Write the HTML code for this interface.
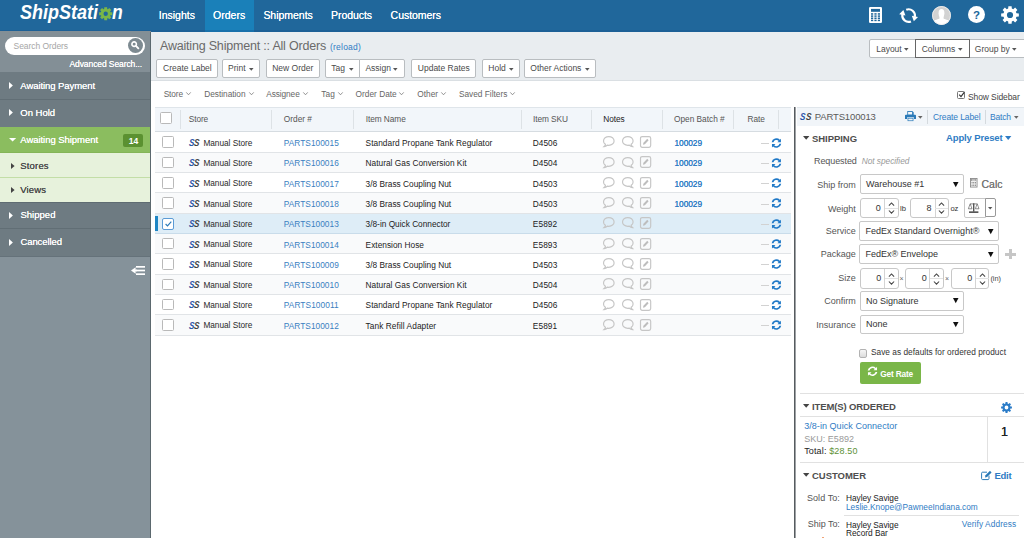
<!DOCTYPE html>
<html><head><meta charset="utf-8"><title>ShipStation</title>
<style>
*{box-sizing:border-box;margin:0;padding:0}
html,body{width:1024px;height:538px;overflow:hidden;background:#fff;font-family:"Liberation Sans",sans-serif}
.t{position:absolute;white-space:nowrap}
.b{position:absolute}
svg{position:absolute;overflow:visible}
.btn{position:absolute;background:#fff;border:1px solid #b9bdc0;border-radius:2px}
.sel{position:absolute;background:#fff;border:1px solid #c8c8c8;border-radius:2px}
.cb{position:absolute;width:12px;height:12px;background:#fff;border:1px solid #b9b9b9;border-radius:1.5px}
.car{position:absolute;width:0;height:0;border-left:2.5px solid transparent;border-right:2.5px solid transparent;border-top:3px solid #444}
</style></head><body>
<div class="b" style="left:0px;top:0px;width:1024.00px;height:32.00px;background:#20679b;"></div>
<div class="b" style="left:204.7px;top:0px;width:49.10px;height:32.00px;background:#1a80b9;"></div>
<div class="b" style="left:0px;top:30px;width:1024.00px;height:2.00px;background:rgba(20,80,140,0.3);"></div>
<svg style="left:98.5px;top:7.1px" width="13.4" height="13.4" viewBox="0 0 14 14"><path fill="#7ab648" fill-rule="evenodd" d="M11.95 5.41 L13.84 5.50 L13.84 8.50 L11.95 8.59 L11.62 9.38 L12.90 10.77 L10.77 12.90 L9.38 11.62 L8.59 11.95 L8.50 13.84 L5.50 13.84 L5.41 11.95 L4.62 11.62 L3.23 12.90 L1.10 10.77 L2.38 9.38 L2.05 8.59 L0.16 8.50 L0.16 5.50 L2.05 5.41 L2.38 4.62 L1.10 3.23 L3.23 1.10 L4.62 2.38 L5.41 2.05 L5.50 0.16 L8.50 0.16 L8.59 2.05 L9.38 2.38 L10.77 1.10 L12.90 3.23 L11.62 4.62Z M9.30 7.00 A2.3 2.3 0 1 0 4.70 7.00 A2.3 2.3 0 1 0 9.30 7.00Z"/></svg>
<svg style="left:869px;top:6.8px" width="13" height="16" viewBox="0 0 13 16"><rect x="0" y="0" width="13" height="16" rx="1.2" fill="#fff"/><rect x="2" y="1.9" width="9" height="2.9" fill="#20679b"/><g fill="#20679b"><rect x="2" y="6.2" width="2.2" height="1.5"/><rect x="5.4" y="6.2" width="2.2" height="1.5"/><rect x="8.8" y="6.2" width="2.2" height="1.5"/><rect x="2" y="8.35" width="2.2" height="1.5"/><rect x="5.4" y="8.35" width="2.2" height="1.5"/><rect x="8.8" y="8.35" width="2.2" height="1.5"/><rect x="2" y="10.5" width="2.2" height="1.5"/><rect x="5.4" y="10.5" width="2.2" height="1.5"/><rect x="8.8" y="10.5" width="2.2" height="1.5"/><rect x="2" y="12.65" width="2.2" height="1.5"/><rect x="5.4" y="12.65" width="2.2" height="1.5"/><rect x="8.8" y="12.65" width="2.2" height="1.5"/></g></svg>
<svg style="left:899px;top:8px" width="20" height="16" viewBox="0 0 20 16"><path d="M7.24 1.76A6.3 6.3 0 0 1 15.76 8.91" fill="none" stroke="#fff" stroke-width="2.2"/><path d="M19.02 8.99L12.76 7.66L14.85 13.21Z" fill="#fff"/><path d="M11.96 13.44A6.3 6.3 0 0 1 3.44 6.29" fill="none" stroke="#fff" stroke-width="2.2"/><path d="M0.18 6.21L6.44 7.54L4.35 1.99Z" fill="#fff"/></svg>
<svg style="left:932.2px;top:6px" width="19" height="19" viewBox="0 0 19 19"><defs><clipPath id="av"><circle cx="9.5" cy="9.5" r="9.3"/></clipPath></defs><circle cx="9.5" cy="9.5" r="9.4" fill="#d2d2d2"/><g clip-path="url(#av)" fill="#fff"><ellipse cx="9.5" cy="7.3" rx="2.9" ry="4.2"/><path d="M7.4 9h4.2v3.4c0 0.8 5.6 1.2 6.6 3.4v4H0.8v-4c1-2.2 6.6-2.6 6.6-3.4z"/></g><circle cx="9.5" cy="9.5" r="9" fill="none" stroke="#ececec" stroke-width="0.9"/></svg>
<div class="b" style="left:967.8px;top:6px;width:17.2px;height:17.2px;border-radius:9px;background:#fff"></div>
<svg style="left:1001px;top:6px" width="18" height="18" viewBox="0 0 18 18"><path fill="#fff" fill-rule="evenodd" d="M15.45 7.18 L17.85 7.38 L17.85 10.62 L15.45 10.82 L14.85 12.27 L16.40 14.12 L14.12 16.40 L12.27 14.85 L10.82 15.45 L10.62 17.85 L7.38 17.85 L7.18 15.45 L5.73 14.85 L3.88 16.40 L1.60 14.12 L3.15 12.27 L2.55 10.82 L0.15 10.62 L0.15 7.38 L2.55 7.18 L3.15 5.73 L1.60 3.88 L3.88 1.60 L5.73 3.15 L7.18 2.55 L7.38 0.15 L10.62 0.15 L10.82 2.55 L12.27 3.15 L14.12 1.60 L16.40 3.88 L14.85 5.73Z M12.10 9.00 A3.1 3.1 0 1 0 5.90 9.00 A3.1 3.1 0 1 0 12.10 9.00Z"/></svg>
<div class="b" style="left:0px;top:31px;width:151.00px;height:507.00px;background:#85929a;"></div>
<div class="b" style="left:0px;top:31px;width:151.00px;height:41.00px;background:#838f96;"></div>
<div class="b" style="left:0px;top:72px;width:151.00px;height:27.30px;background:#6e7b82;"></div>
<div class="b" style="left:0px;top:99.3px;width:151.00px;height:27.70px;background:#6e7b82;border-top:1px solid #616e75;"></div>
<div class="b" style="left:0px;top:127px;width:151.00px;height:25.20px;background:#8bbd5f;"></div>
<div class="b" style="left:0px;top:151.8px;width:151.00px;height:25.70px;background:#e7f2dc;border-top:1px solid #84b558;"></div>
<div class="b" style="left:0px;top:176.9px;width:151.00px;height:25.40px;background:#e7f2dc;border-top:1px solid #c3dea7;"></div>
<div class="b" style="left:0px;top:202.3px;width:151.00px;height:26.00px;background:#6e7b82;border-top:1px solid #5f6c72;"></div>
<div class="b" style="left:0px;top:228.3px;width:151.00px;height:27.70px;background:#6e7b82;border-top:1px solid #616e75;"></div>
<div class="b" style="left:0px;top:256px;width:151.00px;height:1.00px;background:#65727a;"></div>
<div class="b" style="left:150px;top:32px;width:1.10px;height:506.00px;background:#5b686e;"></div>
<div class="b" style="left:5.2px;top:36.7px;width:140px;height:18px;border-radius:9px;background:#fff"></div>
<div class="b" style="left:127.8px;top:38px;width:15.2px;height:15.2px;border-radius:8px;background:#7d8a91"></div>
<svg style="left:131.4px;top:41.3px" width="8.4" height="8.4" viewBox="0 0 8 8"><circle cx="3" cy="3" r="2.15" fill="none" stroke="#fff" stroke-width="1.5"/><path d="M4.7 4.7L7 7" stroke="#fff" stroke-width="1.8" stroke-linecap="round"/></svg>
<svg style="left:8.5px;top:82.40px" width="3.9" height="7.0" viewBox="0 0 3.9 7.0"><path d="M0 0L3.9 3.5L0 7.0Z" fill="#fff"/></svg>
<svg style="left:8.5px;top:109.40px" width="3.9" height="7.0" viewBox="0 0 3.9 7.0"><path d="M0 0L3.9 3.5L0 7.0Z" fill="#fff"/></svg>
<svg style="left:8.9px;top:138.35px" width="7.2" height="3.5" viewBox="0 0 7.2 3.5"><path d="M0 0H7.2L3.6 3.5Z" fill="#fff"/></svg>
<svg style="left:10.6px;top:162.60px" width="3.6" height="6.0" viewBox="0 0 3.6 6.0"><path d="M0 0L3.6 3.0L0 6.0Z" fill="#444"/></svg>
<svg style="left:10.6px;top:187.00px" width="3.6" height="6.0" viewBox="0 0 3.6 6.0"><path d="M0 0L3.6 3.0L0 6.0Z" fill="#444"/></svg>
<svg style="left:8.5px;top:211.80px" width="3.9" height="7.0" viewBox="0 0 3.9 7.0"><path d="M0 0L3.9 3.5L0 7.0Z" fill="#fff"/></svg>
<svg style="left:8.5px;top:238.60px" width="3.9" height="7.0" viewBox="0 0 3.9 7.0"><path d="M0 0L3.9 3.5L0 7.0Z" fill="#fff"/></svg>
<div class="b" style="left:123px;top:134px;width:20.4px;height:13.2px;border-radius:2px;background:#5b9131"></div>
<svg style="left:131.3px;top:265.6px" width="14" height="9" viewBox="0 0 14 9"><g fill="#fff"><rect x="5" y="0" width="9" height="1.7"/><rect x="5" y="3.65" width="9" height="1.7"/><rect x="5" y="7.3" width="9" height="1.7"/><path d="M0 4.5L4.6 1.2V7.8z"/><rect x="3" y="3.65" width="3" height="1.7"/></g></svg>
<div class="b" style="left:151.1px;top:32px;width:872.90px;height:49.40px;background:#e9edf0;border-bottom:1px solid #dadfe3;"></div>
<div class="btn" style="left:156.3px;top:59px;width:62.20px;height:18.50px;"></div>
<div class="btn" style="left:221.6px;top:59px;width:38.40px;height:18.50px;"></div>
<div class="btn" style="left:265.5px;top:59px;width:54.50px;height:18.50px;"></div>
<div class="btn" style="left:325px;top:59px;width:34.60px;height:18.50px;border-radius:2px 0 0 2px;"></div>
<div class="btn" style="left:358.8px;top:59px;width:46.20px;height:18.50px;border-radius:0 2px 2px 0;"></div>
<div class="btn" style="left:411.2px;top:59px;width:65.20px;height:18.50px;"></div>
<div class="btn" style="left:482.2px;top:59px;width:37.80px;height:18.50px;"></div>
<div class="btn" style="left:524px;top:59px;width:71.70px;height:18.50px;"></div>
<div class="btn" style="left:869.3px;top:39.4px;width:46.30px;height:18.50px;border-radius:2px 0 0 2px;"></div>
<div class="btn" style="left:969.3px;top:39.4px;width:56.70px;height:18.50px;border-radius:0;"></div>
<div class="btn" style="left:915.1px;top:39.4px;width:54.70px;height:18.50px;border-color:#666;border-radius:0;"></div>
<svg style="left:249.3px;top:67.55px" width="4.6" height="2.7" viewBox="0 0 4.6 2.7"><path d="M0 0H4.6L2.3 2.7Z" fill="#555"/></svg>
<svg style="left:348.7px;top:67.55px" width="4.6" height="2.7" viewBox="0 0 4.6 2.7"><path d="M0 0H4.6L2.3 2.7Z" fill="#555"/></svg>
<svg style="left:393.3px;top:67.55px" width="4.6" height="2.7" viewBox="0 0 4.6 2.7"><path d="M0 0H4.6L2.3 2.7Z" fill="#555"/></svg>
<svg style="left:509.3px;top:67.55px" width="4.6" height="2.7" viewBox="0 0 4.6 2.7"><path d="M0 0H4.6L2.3 2.7Z" fill="#555"/></svg>
<svg style="left:584.5px;top:67.55px" width="4.6" height="2.7" viewBox="0 0 4.6 2.7"><path d="M0 0H4.6L2.3 2.7Z" fill="#555"/></svg>
<svg style="left:904px;top:48.35px" width="4.6" height="2.7" viewBox="0 0 4.6 2.7"><path d="M0 0H4.6L2.3 2.7Z" fill="#555"/></svg>
<svg style="left:957.6px;top:48.35px" width="4.6" height="2.7" viewBox="0 0 4.6 2.7"><path d="M0 0H4.6L2.3 2.7Z" fill="#555"/></svg>
<svg style="left:1012px;top:48.35px" width="4.6" height="2.7" viewBox="0 0 4.6 2.7"><path d="M0 0H4.6L2.3 2.7Z" fill="#555"/></svg>
<svg style="left:185.6px;top:92.10000000000001px" width="5" height="3.4" viewBox="0 0 5 3.4"><path d="M0.3 0.4L2.5 2.8L4.7 0.4" fill="none" stroke="#777" stroke-width="0.8"/></svg>
<svg style="left:248.8px;top:92.10000000000001px" width="5" height="3.4" viewBox="0 0 5 3.4"><path d="M0.3 0.4L2.5 2.8L4.7 0.4" fill="none" stroke="#777" stroke-width="0.8"/></svg>
<svg style="left:302.6px;top:92.10000000000001px" width="5" height="3.4" viewBox="0 0 5 3.4"><path d="M0.3 0.4L2.5 2.8L4.7 0.4" fill="none" stroke="#777" stroke-width="0.8"/></svg>
<svg style="left:338px;top:92.10000000000001px" width="5" height="3.4" viewBox="0 0 5 3.4"><path d="M0.3 0.4L2.5 2.8L4.7 0.4" fill="none" stroke="#777" stroke-width="0.8"/></svg>
<svg style="left:399.3px;top:92.10000000000001px" width="5" height="3.4" viewBox="0 0 5 3.4"><path d="M0.3 0.4L2.5 2.8L4.7 0.4" fill="none" stroke="#777" stroke-width="0.8"/></svg>
<svg style="left:440.6px;top:92.10000000000001px" width="5" height="3.4" viewBox="0 0 5 3.4"><path d="M0.3 0.4L2.5 2.8L4.7 0.4" fill="none" stroke="#777" stroke-width="0.8"/></svg>
<svg style="left:509.8px;top:92.10000000000001px" width="5" height="3.4" viewBox="0 0 5 3.4"><path d="M0.3 0.4L2.5 2.8L4.7 0.4" fill="none" stroke="#777" stroke-width="0.8"/></svg>
<div class="b" style="left:956.5px;top:91px;width:8.6px;height:8.4px;border:1px solid #777;border-radius:1.5px;background:#fff"></div>
<svg style="left:957.8px;top:90.6px" width="8" height="8" viewBox="0 0 8 8"><path d="M1.2 3.6L3 5.6L6.4 1.2" fill="none" stroke="#333" stroke-width="1.2"/></svg>
<div class="b" style="left:155.4px;top:107px;width:635.60px;height:25.00px;background:#f2f6fa;border-top:1px solid #dfe5ea;border-bottom:1px solid #d6dce1;"></div>
<div class="b" style="left:180.0px;top:110px;width:1.00px;height:19.00px;background:#dde2e6;"></div>
<div class="b" style="left:270.8px;top:110px;width:1.00px;height:19.00px;background:#dde2e6;"></div>
<div class="b" style="left:353.0px;top:110px;width:1.00px;height:19.00px;background:#dde2e6;"></div>
<div class="b" style="left:520.8px;top:110px;width:1.00px;height:19.00px;background:#dde2e6;"></div>
<div class="b" style="left:590.9px;top:110px;width:1.00px;height:19.00px;background:#dde2e6;"></div>
<div class="b" style="left:661.7px;top:110px;width:1.00px;height:19.00px;background:#dde2e6;"></div>
<div class="b" style="left:733.0px;top:110px;width:1.00px;height:19.00px;background:#dde2e6;"></div>
<div class="b" style="left:778.2px;top:110px;width:1.00px;height:19.00px;background:#dde2e6;"></div>
<div class="cb" style="left:160.3px;top:112px"></div>
<div class="b" style="left:155.4px;top:132.55px;width:635.60px;height:20.30px;background:#fff;border-bottom:1px solid #e1e4e7;"></div>
<div class="cb" style="left:162.2px;top:136.40px;width:11.8px;height:11.6px"></div>
<svg style="left:603.2px;top:136.20px" width="11.6" height="11" viewBox="0 0 11.4 10" preserveAspectRatio="none"><path d="M5.7 0.5C8.6 0.5 10.9 2.3 10.9 4.5S8.6 8.5 5.7 8.5C5.2 8.5 4.7 8.45 4.2 8.35C3.4 9 2.3 9.5 1.1 9.6C1.8 9 2.3 8.3 2.4 7.6C1.2 6.9 0.5 5.8 0.5 4.5C0.5 2.3 2.8 0.5 5.7 0.5Z" fill="none" stroke="#c6c6c6" stroke-width="1.15"/></svg>
<svg style="left:621.8px;top:136.20px" width="11.6" height="11" viewBox="0 0 11.4 10" preserveAspectRatio="none"><g transform="translate(11.4,0) scale(-1,1)"><path d="M5.7 0.5C8.6 0.5 10.9 2.3 10.9 4.5S8.6 8.5 5.7 8.5C5.2 8.5 4.7 8.45 4.2 8.35C3.4 9 2.3 9.5 1.1 9.6C1.8 9 2.3 8.3 2.4 7.6C1.2 6.9 0.5 5.8 0.5 4.5C0.5 2.3 2.8 0.5 5.7 0.5Z" fill="none" stroke="#c6c6c6" stroke-width="1.15"/></g></svg>
<svg style="left:640.3px;top:136.10px" width="11.2" height="11.8" viewBox="0 0 11 11" preserveAspectRatio="none"><rect x="0.5" y="0.5" width="10" height="10" rx="1.6" fill="none" stroke="#c6c6c6" stroke-width="1.15"/><path d="M2.9 8.1L3.4 6.2L7.1 2.5L8.5 3.9L4.8 7.6Z" fill="#bdbdbd"/></svg>
<div class="b" style="left:760.8px;top:142.60000000000002px;width:7.80px;height:0.80px;background:#d2d2d2;"></div>
<svg style="left:770.5px;top:137.50px" width="10.9" height="10.2" viewBox="0 0 16 15"><path fill="#2079c7" d="M14.6 1v5.2h-5.2l1.9-1.9A4.6 4.6 0 0 0 3.6 6.4H0.9A7.2 7.2 0 0 1 13 2.6z M1.4 14v-5.2h5.2l-1.9 1.9A4.6 4.6 0 0 0 12.4 8.6h2.7A7.2 7.2 0 0 1 3 12.4z"/></svg>
<div class="b" style="left:155.4px;top:152.85000000000002px;width:635.60px;height:20.30px;background:#f9fafb;border-bottom:1px solid #e1e4e7;"></div>
<div class="cb" style="left:162.2px;top:156.70px;width:11.8px;height:11.6px"></div>
<svg style="left:603.2px;top:156.50px" width="11.6" height="11" viewBox="0 0 11.4 10" preserveAspectRatio="none"><path d="M5.7 0.5C8.6 0.5 10.9 2.3 10.9 4.5S8.6 8.5 5.7 8.5C5.2 8.5 4.7 8.45 4.2 8.35C3.4 9 2.3 9.5 1.1 9.6C1.8 9 2.3 8.3 2.4 7.6C1.2 6.9 0.5 5.8 0.5 4.5C0.5 2.3 2.8 0.5 5.7 0.5Z" fill="none" stroke="#c6c6c6" stroke-width="1.15"/></svg>
<svg style="left:621.8px;top:156.50px" width="11.6" height="11" viewBox="0 0 11.4 10" preserveAspectRatio="none"><g transform="translate(11.4,0) scale(-1,1)"><path d="M5.7 0.5C8.6 0.5 10.9 2.3 10.9 4.5S8.6 8.5 5.7 8.5C5.2 8.5 4.7 8.45 4.2 8.35C3.4 9 2.3 9.5 1.1 9.6C1.8 9 2.3 8.3 2.4 7.6C1.2 6.9 0.5 5.8 0.5 4.5C0.5 2.3 2.8 0.5 5.7 0.5Z" fill="none" stroke="#c6c6c6" stroke-width="1.15"/></g></svg>
<svg style="left:640.3px;top:156.40px" width="11.2" height="11.8" viewBox="0 0 11 11" preserveAspectRatio="none"><rect x="0.5" y="0.5" width="10" height="10" rx="1.6" fill="none" stroke="#c6c6c6" stroke-width="1.15"/><path d="M2.9 8.1L3.4 6.2L7.1 2.5L8.5 3.9L4.8 7.6Z" fill="#bdbdbd"/></svg>
<div class="b" style="left:760.8px;top:162.90000000000003px;width:7.80px;height:0.80px;background:#d2d2d2;"></div>
<svg style="left:770.5px;top:157.80px" width="10.9" height="10.2" viewBox="0 0 16 15"><path fill="#2079c7" d="M14.6 1v5.2h-5.2l1.9-1.9A4.6 4.6 0 0 0 3.6 6.4H0.9A7.2 7.2 0 0 1 13 2.6z M1.4 14v-5.2h5.2l-1.9 1.9A4.6 4.6 0 0 0 12.4 8.6h2.7A7.2 7.2 0 0 1 3 12.4z"/></svg>
<div class="b" style="left:155.4px;top:173.15px;width:635.60px;height:20.30px;background:#fff;border-bottom:1px solid #e1e4e7;"></div>
<div class="cb" style="left:162.2px;top:177.00px;width:11.8px;height:11.6px"></div>
<svg style="left:603.2px;top:176.80px" width="11.6" height="11" viewBox="0 0 11.4 10" preserveAspectRatio="none"><path d="M5.7 0.5C8.6 0.5 10.9 2.3 10.9 4.5S8.6 8.5 5.7 8.5C5.2 8.5 4.7 8.45 4.2 8.35C3.4 9 2.3 9.5 1.1 9.6C1.8 9 2.3 8.3 2.4 7.6C1.2 6.9 0.5 5.8 0.5 4.5C0.5 2.3 2.8 0.5 5.7 0.5Z" fill="none" stroke="#c6c6c6" stroke-width="1.15"/></svg>
<svg style="left:621.8px;top:176.80px" width="11.6" height="11" viewBox="0 0 11.4 10" preserveAspectRatio="none"><g transform="translate(11.4,0) scale(-1,1)"><path d="M5.7 0.5C8.6 0.5 10.9 2.3 10.9 4.5S8.6 8.5 5.7 8.5C5.2 8.5 4.7 8.45 4.2 8.35C3.4 9 2.3 9.5 1.1 9.6C1.8 9 2.3 8.3 2.4 7.6C1.2 6.9 0.5 5.8 0.5 4.5C0.5 2.3 2.8 0.5 5.7 0.5Z" fill="none" stroke="#c6c6c6" stroke-width="1.15"/></g></svg>
<svg style="left:640.3px;top:176.70px" width="11.2" height="11.8" viewBox="0 0 11 11" preserveAspectRatio="none"><rect x="0.5" y="0.5" width="10" height="10" rx="1.6" fill="none" stroke="#c6c6c6" stroke-width="1.15"/><path d="M2.9 8.1L3.4 6.2L7.1 2.5L8.5 3.9L4.8 7.6Z" fill="#bdbdbd"/></svg>
<div class="b" style="left:760.8px;top:183.20000000000002px;width:7.80px;height:0.80px;background:#d2d2d2;"></div>
<svg style="left:770.5px;top:178.10px" width="10.9" height="10.2" viewBox="0 0 16 15"><path fill="#2079c7" d="M14.6 1v5.2h-5.2l1.9-1.9A4.6 4.6 0 0 0 3.6 6.4H0.9A7.2 7.2 0 0 1 13 2.6z M1.4 14v-5.2h5.2l-1.9 1.9A4.6 4.6 0 0 0 12.4 8.6h2.7A7.2 7.2 0 0 1 3 12.4z"/></svg>
<div class="b" style="left:155.4px;top:193.45000000000002px;width:635.60px;height:20.30px;background:#f9fafb;border-bottom:1px solid #e1e4e7;"></div>
<div class="cb" style="left:162.2px;top:197.30px;width:11.8px;height:11.6px"></div>
<svg style="left:603.2px;top:197.10px" width="11.6" height="11" viewBox="0 0 11.4 10" preserveAspectRatio="none"><path d="M5.7 0.5C8.6 0.5 10.9 2.3 10.9 4.5S8.6 8.5 5.7 8.5C5.2 8.5 4.7 8.45 4.2 8.35C3.4 9 2.3 9.5 1.1 9.6C1.8 9 2.3 8.3 2.4 7.6C1.2 6.9 0.5 5.8 0.5 4.5C0.5 2.3 2.8 0.5 5.7 0.5Z" fill="none" stroke="#c6c6c6" stroke-width="1.15"/></svg>
<svg style="left:621.8px;top:197.10px" width="11.6" height="11" viewBox="0 0 11.4 10" preserveAspectRatio="none"><g transform="translate(11.4,0) scale(-1,1)"><path d="M5.7 0.5C8.6 0.5 10.9 2.3 10.9 4.5S8.6 8.5 5.7 8.5C5.2 8.5 4.7 8.45 4.2 8.35C3.4 9 2.3 9.5 1.1 9.6C1.8 9 2.3 8.3 2.4 7.6C1.2 6.9 0.5 5.8 0.5 4.5C0.5 2.3 2.8 0.5 5.7 0.5Z" fill="none" stroke="#c6c6c6" stroke-width="1.15"/></g></svg>
<svg style="left:640.3px;top:197.00px" width="11.2" height="11.8" viewBox="0 0 11 11" preserveAspectRatio="none"><rect x="0.5" y="0.5" width="10" height="10" rx="1.6" fill="none" stroke="#c6c6c6" stroke-width="1.15"/><path d="M2.9 8.1L3.4 6.2L7.1 2.5L8.5 3.9L4.8 7.6Z" fill="#bdbdbd"/></svg>
<div class="b" style="left:760.8px;top:203.50000000000003px;width:7.80px;height:0.80px;background:#d2d2d2;"></div>
<svg style="left:770.5px;top:198.40px" width="10.9" height="10.2" viewBox="0 0 16 15"><path fill="#2079c7" d="M14.6 1v5.2h-5.2l1.9-1.9A4.6 4.6 0 0 0 3.6 6.4H0.9A7.2 7.2 0 0 1 13 2.6z M1.4 14v-5.2h5.2l-1.9 1.9A4.6 4.6 0 0 0 12.4 8.6h2.7A7.2 7.2 0 0 1 3 12.4z"/></svg>
<div class="b" style="left:155.4px;top:213.75px;width:635.60px;height:20.30px;background:#deedf7;border-bottom:1px solid #c9dcea;"></div>
<div class="b" style="left:155.3px;top:216.45px;width:2.70px;height:14.90px;background:#1f86c4;"></div>
<div class="cb" style="left:162px;top:217.50px;width:12px;height:12px;border-color:#5b9bd5;border-radius:2px"></div>
<svg style="left:164.8px;top:220.60px" width="7" height="6" viewBox="0 0 7 6"><path d="M0.6 3L2.5 4.9L6.3 0.7" fill="none" stroke="#2a7ab8" stroke-width="1.15"/></svg>
<svg style="left:603.2px;top:217.40px" width="11.6" height="11" viewBox="0 0 11.4 10" preserveAspectRatio="none"><path d="M5.7 0.5C8.6 0.5 10.9 2.3 10.9 4.5S8.6 8.5 5.7 8.5C5.2 8.5 4.7 8.45 4.2 8.35C3.4 9 2.3 9.5 1.1 9.6C1.8 9 2.3 8.3 2.4 7.6C1.2 6.9 0.5 5.8 0.5 4.5C0.5 2.3 2.8 0.5 5.7 0.5Z" fill="none" stroke="#c6c6c6" stroke-width="1.15"/></svg>
<svg style="left:621.8px;top:217.40px" width="11.6" height="11" viewBox="0 0 11.4 10" preserveAspectRatio="none"><g transform="translate(11.4,0) scale(-1,1)"><path d="M5.7 0.5C8.6 0.5 10.9 2.3 10.9 4.5S8.6 8.5 5.7 8.5C5.2 8.5 4.7 8.45 4.2 8.35C3.4 9 2.3 9.5 1.1 9.6C1.8 9 2.3 8.3 2.4 7.6C1.2 6.9 0.5 5.8 0.5 4.5C0.5 2.3 2.8 0.5 5.7 0.5Z" fill="none" stroke="#c6c6c6" stroke-width="1.15"/></g></svg>
<svg style="left:640.3px;top:217.30px" width="11.2" height="11.8" viewBox="0 0 11 11" preserveAspectRatio="none"><rect x="0.5" y="0.5" width="10" height="10" rx="1.6" fill="none" stroke="#c6c6c6" stroke-width="1.15"/><path d="M2.9 8.1L3.4 6.2L7.1 2.5L8.5 3.9L4.8 7.6Z" fill="#bdbdbd"/></svg>
<div class="b" style="left:760.8px;top:223.8px;width:7.80px;height:0.80px;background:#d2d2d2;"></div>
<svg style="left:770.5px;top:218.70px" width="10.9" height="10.2" viewBox="0 0 16 15"><path fill="#2079c7" d="M14.6 1v5.2h-5.2l1.9-1.9A4.6 4.6 0 0 0 3.6 6.4H0.9A7.2 7.2 0 0 1 13 2.6z M1.4 14v-5.2h5.2l-1.9 1.9A4.6 4.6 0 0 0 12.4 8.6h2.7A7.2 7.2 0 0 1 3 12.4z"/></svg>
<div class="b" style="left:155.4px;top:234.05px;width:635.60px;height:20.30px;background:#f9fafb;border-bottom:1px solid #e1e4e7;"></div>
<div class="cb" style="left:162.2px;top:237.90px;width:11.8px;height:11.6px"></div>
<svg style="left:603.2px;top:237.70px" width="11.6" height="11" viewBox="0 0 11.4 10" preserveAspectRatio="none"><path d="M5.7 0.5C8.6 0.5 10.9 2.3 10.9 4.5S8.6 8.5 5.7 8.5C5.2 8.5 4.7 8.45 4.2 8.35C3.4 9 2.3 9.5 1.1 9.6C1.8 9 2.3 8.3 2.4 7.6C1.2 6.9 0.5 5.8 0.5 4.5C0.5 2.3 2.8 0.5 5.7 0.5Z" fill="none" stroke="#c6c6c6" stroke-width="1.15"/></svg>
<svg style="left:621.8px;top:237.70px" width="11.6" height="11" viewBox="0 0 11.4 10" preserveAspectRatio="none"><g transform="translate(11.4,0) scale(-1,1)"><path d="M5.7 0.5C8.6 0.5 10.9 2.3 10.9 4.5S8.6 8.5 5.7 8.5C5.2 8.5 4.7 8.45 4.2 8.35C3.4 9 2.3 9.5 1.1 9.6C1.8 9 2.3 8.3 2.4 7.6C1.2 6.9 0.5 5.8 0.5 4.5C0.5 2.3 2.8 0.5 5.7 0.5Z" fill="none" stroke="#c6c6c6" stroke-width="1.15"/></g></svg>
<svg style="left:640.3px;top:237.60px" width="11.2" height="11.8" viewBox="0 0 11 11" preserveAspectRatio="none"><rect x="0.5" y="0.5" width="10" height="10" rx="1.6" fill="none" stroke="#c6c6c6" stroke-width="1.15"/><path d="M2.9 8.1L3.4 6.2L7.1 2.5L8.5 3.9L4.8 7.6Z" fill="#bdbdbd"/></svg>
<div class="b" style="left:760.8px;top:244.10000000000002px;width:7.80px;height:0.80px;background:#d2d2d2;"></div>
<svg style="left:770.5px;top:239.00px" width="10.9" height="10.2" viewBox="0 0 16 15"><path fill="#2079c7" d="M14.6 1v5.2h-5.2l1.9-1.9A4.6 4.6 0 0 0 3.6 6.4H0.9A7.2 7.2 0 0 1 13 2.6z M1.4 14v-5.2h5.2l-1.9 1.9A4.6 4.6 0 0 0 12.4 8.6h2.7A7.2 7.2 0 0 1 3 12.4z"/></svg>
<div class="b" style="left:155.4px;top:254.35000000000002px;width:635.60px;height:20.30px;background:#fff;border-bottom:1px solid #e1e4e7;"></div>
<div class="cb" style="left:162.2px;top:258.20px;width:11.8px;height:11.6px"></div>
<svg style="left:603.2px;top:258.00px" width="11.6" height="11" viewBox="0 0 11.4 10" preserveAspectRatio="none"><path d="M5.7 0.5C8.6 0.5 10.9 2.3 10.9 4.5S8.6 8.5 5.7 8.5C5.2 8.5 4.7 8.45 4.2 8.35C3.4 9 2.3 9.5 1.1 9.6C1.8 9 2.3 8.3 2.4 7.6C1.2 6.9 0.5 5.8 0.5 4.5C0.5 2.3 2.8 0.5 5.7 0.5Z" fill="none" stroke="#c6c6c6" stroke-width="1.15"/></svg>
<svg style="left:621.8px;top:258.00px" width="11.6" height="11" viewBox="0 0 11.4 10" preserveAspectRatio="none"><g transform="translate(11.4,0) scale(-1,1)"><path d="M5.7 0.5C8.6 0.5 10.9 2.3 10.9 4.5S8.6 8.5 5.7 8.5C5.2 8.5 4.7 8.45 4.2 8.35C3.4 9 2.3 9.5 1.1 9.6C1.8 9 2.3 8.3 2.4 7.6C1.2 6.9 0.5 5.8 0.5 4.5C0.5 2.3 2.8 0.5 5.7 0.5Z" fill="none" stroke="#c6c6c6" stroke-width="1.15"/></g></svg>
<svg style="left:640.3px;top:257.90px" width="11.2" height="11.8" viewBox="0 0 11 11" preserveAspectRatio="none"><rect x="0.5" y="0.5" width="10" height="10" rx="1.6" fill="none" stroke="#c6c6c6" stroke-width="1.15"/><path d="M2.9 8.1L3.4 6.2L7.1 2.5L8.5 3.9L4.8 7.6Z" fill="#bdbdbd"/></svg>
<div class="b" style="left:760.8px;top:264.4px;width:7.80px;height:0.80px;background:#d2d2d2;"></div>
<svg style="left:770.5px;top:259.30px" width="10.9" height="10.2" viewBox="0 0 16 15"><path fill="#2079c7" d="M14.6 1v5.2h-5.2l1.9-1.9A4.6 4.6 0 0 0 3.6 6.4H0.9A7.2 7.2 0 0 1 13 2.6z M1.4 14v-5.2h5.2l-1.9 1.9A4.6 4.6 0 0 0 12.4 8.6h2.7A7.2 7.2 0 0 1 3 12.4z"/></svg>
<div class="b" style="left:155.4px;top:274.65px;width:635.60px;height:20.30px;background:#f9fafb;border-bottom:1px solid #e1e4e7;"></div>
<div class="cb" style="left:162.2px;top:278.50px;width:11.8px;height:11.6px"></div>
<svg style="left:603.2px;top:278.30px" width="11.6" height="11" viewBox="0 0 11.4 10" preserveAspectRatio="none"><path d="M5.7 0.5C8.6 0.5 10.9 2.3 10.9 4.5S8.6 8.5 5.7 8.5C5.2 8.5 4.7 8.45 4.2 8.35C3.4 9 2.3 9.5 1.1 9.6C1.8 9 2.3 8.3 2.4 7.6C1.2 6.9 0.5 5.8 0.5 4.5C0.5 2.3 2.8 0.5 5.7 0.5Z" fill="none" stroke="#c6c6c6" stroke-width="1.15"/></svg>
<svg style="left:621.8px;top:278.30px" width="11.6" height="11" viewBox="0 0 11.4 10" preserveAspectRatio="none"><g transform="translate(11.4,0) scale(-1,1)"><path d="M5.7 0.5C8.6 0.5 10.9 2.3 10.9 4.5S8.6 8.5 5.7 8.5C5.2 8.5 4.7 8.45 4.2 8.35C3.4 9 2.3 9.5 1.1 9.6C1.8 9 2.3 8.3 2.4 7.6C1.2 6.9 0.5 5.8 0.5 4.5C0.5 2.3 2.8 0.5 5.7 0.5Z" fill="none" stroke="#c6c6c6" stroke-width="1.15"/></g></svg>
<svg style="left:640.3px;top:278.20px" width="11.2" height="11.8" viewBox="0 0 11 11" preserveAspectRatio="none"><rect x="0.5" y="0.5" width="10" height="10" rx="1.6" fill="none" stroke="#c6c6c6" stroke-width="1.15"/><path d="M2.9 8.1L3.4 6.2L7.1 2.5L8.5 3.9L4.8 7.6Z" fill="#bdbdbd"/></svg>
<div class="b" style="left:760.8px;top:284.69999999999993px;width:7.80px;height:0.80px;background:#d2d2d2;"></div>
<svg style="left:770.5px;top:279.60px" width="10.9" height="10.2" viewBox="0 0 16 15"><path fill="#2079c7" d="M14.6 1v5.2h-5.2l1.9-1.9A4.6 4.6 0 0 0 3.6 6.4H0.9A7.2 7.2 0 0 1 13 2.6z M1.4 14v-5.2h5.2l-1.9 1.9A4.6 4.6 0 0 0 12.4 8.6h2.7A7.2 7.2 0 0 1 3 12.4z"/></svg>
<div class="b" style="left:155.4px;top:294.95000000000005px;width:635.60px;height:20.30px;background:#fff;border-bottom:1px solid #e1e4e7;"></div>
<div class="cb" style="left:162.2px;top:298.80px;width:11.8px;height:11.6px"></div>
<svg style="left:603.2px;top:298.60px" width="11.6" height="11" viewBox="0 0 11.4 10" preserveAspectRatio="none"><path d="M5.7 0.5C8.6 0.5 10.9 2.3 10.9 4.5S8.6 8.5 5.7 8.5C5.2 8.5 4.7 8.45 4.2 8.35C3.4 9 2.3 9.5 1.1 9.6C1.8 9 2.3 8.3 2.4 7.6C1.2 6.9 0.5 5.8 0.5 4.5C0.5 2.3 2.8 0.5 5.7 0.5Z" fill="none" stroke="#c6c6c6" stroke-width="1.15"/></svg>
<svg style="left:621.8px;top:298.60px" width="11.6" height="11" viewBox="0 0 11.4 10" preserveAspectRatio="none"><g transform="translate(11.4,0) scale(-1,1)"><path d="M5.7 0.5C8.6 0.5 10.9 2.3 10.9 4.5S8.6 8.5 5.7 8.5C5.2 8.5 4.7 8.45 4.2 8.35C3.4 9 2.3 9.5 1.1 9.6C1.8 9 2.3 8.3 2.4 7.6C1.2 6.9 0.5 5.8 0.5 4.5C0.5 2.3 2.8 0.5 5.7 0.5Z" fill="none" stroke="#c6c6c6" stroke-width="1.15"/></g></svg>
<svg style="left:640.3px;top:298.50px" width="11.2" height="11.8" viewBox="0 0 11 11" preserveAspectRatio="none"><rect x="0.5" y="0.5" width="10" height="10" rx="1.6" fill="none" stroke="#c6c6c6" stroke-width="1.15"/><path d="M2.9 8.1L3.4 6.2L7.1 2.5L8.5 3.9L4.8 7.6Z" fill="#bdbdbd"/></svg>
<div class="b" style="left:760.8px;top:305.0px;width:7.80px;height:0.80px;background:#d2d2d2;"></div>
<svg style="left:770.5px;top:299.90px" width="10.9" height="10.2" viewBox="0 0 16 15"><path fill="#2079c7" d="M14.6 1v5.2h-5.2l1.9-1.9A4.6 4.6 0 0 0 3.6 6.4H0.9A7.2 7.2 0 0 1 13 2.6z M1.4 14v-5.2h5.2l-1.9 1.9A4.6 4.6 0 0 0 12.4 8.6h2.7A7.2 7.2 0 0 1 3 12.4z"/></svg>
<div class="b" style="left:155.4px;top:315.25px;width:635.60px;height:20.30px;background:#f9fafb;border-bottom:1px solid #e1e4e7;"></div>
<div class="cb" style="left:162.2px;top:319.10px;width:11.8px;height:11.6px"></div>
<svg style="left:603.2px;top:318.90px" width="11.6" height="11" viewBox="0 0 11.4 10" preserveAspectRatio="none"><path d="M5.7 0.5C8.6 0.5 10.9 2.3 10.9 4.5S8.6 8.5 5.7 8.5C5.2 8.5 4.7 8.45 4.2 8.35C3.4 9 2.3 9.5 1.1 9.6C1.8 9 2.3 8.3 2.4 7.6C1.2 6.9 0.5 5.8 0.5 4.5C0.5 2.3 2.8 0.5 5.7 0.5Z" fill="none" stroke="#c6c6c6" stroke-width="1.15"/></svg>
<svg style="left:621.8px;top:318.90px" width="11.6" height="11" viewBox="0 0 11.4 10" preserveAspectRatio="none"><g transform="translate(11.4,0) scale(-1,1)"><path d="M5.7 0.5C8.6 0.5 10.9 2.3 10.9 4.5S8.6 8.5 5.7 8.5C5.2 8.5 4.7 8.45 4.2 8.35C3.4 9 2.3 9.5 1.1 9.6C1.8 9 2.3 8.3 2.4 7.6C1.2 6.9 0.5 5.8 0.5 4.5C0.5 2.3 2.8 0.5 5.7 0.5Z" fill="none" stroke="#c6c6c6" stroke-width="1.15"/></g></svg>
<svg style="left:640.3px;top:318.80px" width="11.2" height="11.8" viewBox="0 0 11 11" preserveAspectRatio="none"><rect x="0.5" y="0.5" width="10" height="10" rx="1.6" fill="none" stroke="#c6c6c6" stroke-width="1.15"/><path d="M2.9 8.1L3.4 6.2L7.1 2.5L8.5 3.9L4.8 7.6Z" fill="#bdbdbd"/></svg>
<div class="b" style="left:760.8px;top:325.29999999999995px;width:7.80px;height:0.80px;background:#d2d2d2;"></div>
<svg style="left:770.5px;top:320.20px" width="10.9" height="10.2" viewBox="0 0 16 15"><path fill="#2079c7" d="M14.6 1v5.2h-5.2l1.9-1.9A4.6 4.6 0 0 0 3.6 6.4H0.9A7.2 7.2 0 0 1 13 2.6z M1.4 14v-5.2h5.2l-1.9 1.9A4.6 4.6 0 0 0 12.4 8.6h2.7A7.2 7.2 0 0 1 3 12.4z"/></svg>
<div class="b" style="left:794px;top:107px;width:1.00px;height:431.00px;background:#565b5f;"></div>
<div class="b" style="left:795px;top:107px;width:1.00px;height:431.00px;background:#9ea1a4;"></div>
<div class="b" style="left:796.6px;top:107.2px;width:227.40px;height:18.60px;background:#f1f5f9;border-top:1px solid #e0e6eb;"></div>
<div class="b" style="left:927.4px;top:109.5px;width:0.80px;height:14.50px;background:#d5dade;"></div>
<div class="b" style="left:985.3px;top:109.5px;width:0.80px;height:14.50px;background:#d5dade;"></div>
<svg style="left:905.2px;top:110.8px" width="11" height="10.2" viewBox="0 0 11 10"><g fill="#2a7ab8"><path d="M2.3 0h5l1.4 1.4V4H2.3z"/><path d="M0.9 3.6h9.2c0.5 0 0.9 0.4 0.9 0.9v3.3H8.9V6.2H2.1v1.6H0V4.5c0-0.5 0.4-0.9 0.9-0.9z"/><rect x="2.6" y="6.8" width="5.8" height="3.2"/></g><rect x="3.1" y="0.8" width="4" height="2.6" fill="#f1f5f9"/><rect x="3.3" y="7.5" width="4.4" height="1.8" fill="#f1f5f9"/></svg>
<svg style="left:917.8px;top:115.55px" width="4.6" height="2.7" viewBox="0 0 4.6 2.7"><path d="M0 0H4.6L2.3 2.7Z" fill="#666"/></svg>
<svg style="left:1013.6px;top:115.75px" width="4.6" height="2.7" viewBox="0 0 4.6 2.7"><path d="M0 0H4.6L2.3 2.7Z" fill="#666"/></svg>
<svg style="left:802.5px;top:136.20px" width="6.4" height="3.8" viewBox="0 0 6.4 3.8"><path d="M0 0H6.4L3.2 3.8Z" fill="#444"/></svg>
<svg style="left:802.5px;top:404.40px" width="6.4" height="3.8" viewBox="0 0 6.4 3.8"><path d="M0 0H6.4L3.2 3.8Z" fill="#444"/></svg>
<svg style="left:802.5px;top:472.90px" width="6.4" height="3.8" viewBox="0 0 6.4 3.8"><path d="M0 0H6.4L3.2 3.8Z" fill="#444"/></svg>
<svg style="left:1005.2px;top:135.75px" width="6.4" height="3.9" viewBox="0 0 6.4 3.9"><path d="M0 0H6.4L3.2 3.9Z" fill="#2f7cc4"/></svg>
<div class="sel" style="left:860px;top:174.4px;width:103.70px;height:19.40px"></div>
<svg style="left:952.60px;top:181.50px" width="5.5" height="5.2" viewBox="0 0 6 5.4" preserveAspectRatio="none"><path d="M0 0H6L3 5.4Z" fill="#111"/></svg>
<div class="sel" style="left:859.2px;top:221.2px;width:139.40px;height:20.00px"></div>
<svg style="left:987.50px;top:228.60px" width="5.5" height="5.2" viewBox="0 0 6 5.4" preserveAspectRatio="none"><path d="M0 0H6L3 5.4Z" fill="#111"/></svg>
<div class="sel" style="left:859.2px;top:244.4px;width:139.40px;height:19.40px"></div>
<svg style="left:987.50px;top:251.50px" width="5.5" height="5.2" viewBox="0 0 6 5.4" preserveAspectRatio="none"><path d="M0 0H6L3 5.4Z" fill="#111"/></svg>
<div class="sel" style="left:860px;top:291.3px;width:103.70px;height:19.50px"></div>
<svg style="left:952.60px;top:298.45px" width="5.5" height="5.2" viewBox="0 0 6 5.4" preserveAspectRatio="none"><path d="M0 0H6L3 5.4Z" fill="#111"/></svg>
<div class="sel" style="left:860px;top:315.0px;width:103.70px;height:19.10px"></div>
<svg style="left:952.60px;top:321.95px" width="5.5" height="5.2" viewBox="0 0 6 5.4" preserveAspectRatio="none"><path d="M0 0H6L3 5.4Z" fill="#111"/></svg>
<div class="sel" style="left:860px;top:198.4px;width:38.50px;height:19.40px;border-radius:3px"></div>
<div class="b" style="left:884.2px;top:199.4px;width:0.80px;height:17.40px;background:#d4d4d4;"></div>
<div class="b" style="left:885.0px;top:207.70000000000002px;width:12.50px;height:0.80px;background:#e2e2e2;"></div>
<svg style="left:887.90px;top:201.10px" width="7" height="14" viewBox="0 0 7 14"><g fill="none" stroke="#444" stroke-width="1.05"><path d="M0.9 4.7L3.5 2L6.1 4.7"/><path d="M0.9 9.5L3.5 12.2L6.1 9.5"/></g></svg>
<div class="sel" style="left:910.4px;top:198.4px;width:38.40px;height:19.40px;border-radius:3px"></div>
<div class="b" style="left:934.5px;top:199.4px;width:0.80px;height:17.40px;background:#d4d4d4;"></div>
<div class="b" style="left:935.3px;top:207.70000000000002px;width:12.50px;height:0.80px;background:#e2e2e2;"></div>
<svg style="left:938.20px;top:201.10px" width="7" height="14" viewBox="0 0 7 14"><g fill="none" stroke="#444" stroke-width="1.05"><path d="M0.9 4.7L3.5 2L6.1 4.7"/><path d="M0.9 9.5L3.5 12.2L6.1 9.5"/></g></svg>
<div class="sel" style="left:860px;top:268.3px;width:38.50px;height:20.80px;border-radius:3px"></div>
<div class="b" style="left:884.2px;top:269.3px;width:0.80px;height:18.80px;background:#d4d4d4;"></div>
<div class="b" style="left:885.0px;top:278.30000000000007px;width:12.50px;height:0.80px;background:#e2e2e2;"></div>
<svg style="left:887.90px;top:271.70px" width="7" height="14" viewBox="0 0 7 14"><g fill="none" stroke="#444" stroke-width="1.05"><path d="M0.9 4.7L3.5 2L6.1 4.7"/><path d="M0.9 9.5L3.5 12.2L6.1 9.5"/></g></svg>
<div class="sel" style="left:905.4px;top:268.3px;width:38.20px;height:20.80px;border-radius:3px"></div>
<div class="b" style="left:929.3000000000001px;top:269.3px;width:0.80px;height:18.80px;background:#d4d4d4;"></div>
<div class="b" style="left:930.1px;top:278.30000000000007px;width:12.50px;height:0.80px;background:#e2e2e2;"></div>
<svg style="left:933.00px;top:271.70px" width="7" height="14" viewBox="0 0 7 14"><g fill="none" stroke="#444" stroke-width="1.05"><path d="M0.9 4.7L3.5 2L6.1 4.7"/><path d="M0.9 9.5L3.5 12.2L6.1 9.5"/></g></svg>
<div class="sel" style="left:951.1px;top:268.3px;width:38.40px;height:20.80px;border-radius:3px"></div>
<div class="b" style="left:975.2px;top:269.3px;width:0.80px;height:18.80px;background:#d4d4d4;"></div>
<div class="b" style="left:976.0px;top:278.30000000000007px;width:12.50px;height:0.80px;background:#e2e2e2;"></div>
<svg style="left:978.90px;top:271.70px" width="7" height="14" viewBox="0 0 7 14"><g fill="none" stroke="#444" stroke-width="1.05"><path d="M0.9 4.7L3.5 2L6.1 4.7"/><path d="M0.9 9.5L3.5 12.2L6.1 9.5"/></g></svg>
<div class="sel" style="left:963.5px;top:198.4px;width:22.2px;height:19.2px;border-radius:2px 0 0 2px"></div>
<div class="sel" style="left:984.9px;top:198.4px;width:10.8px;height:18.2px;border-radius:0 2px 2px 0;border-color:#999"></div>
<svg style="left:988.1px;top:206.60px" width="4.4" height="2.6" viewBox="0 0 4.4 2.6"><path d="M0 0H4.4L2.2 2.6Z" fill="#555"/></svg>
<svg style="left:968.2px;top:203px" width="11.4" height="10.2" viewBox="0 0 11.4 10.2"><g fill="none" stroke="#666" stroke-width="0.75"><path d="M2.2 0.9C1.6 2.6 0.8 4.2 0.4 5.8H4C3.6 4.2 2.8 2.6 2.2 0.9Z"/><path d="M9.2 0.9C8.6 2.6 7.8 4.2 7.4 5.8H11C10.6 4.2 9.8 2.6 9.2 0.9Z"/><path d="M2 0.9H9.4"/></g><rect x="5" y="0.3" width="1.4" height="8.3" fill="#555"/><rect x="1" y="8.4" width="9.4" height="1.5" fill="#444"/></svg>
<svg style="left:970.4px;top:178px" width="7.5" height="9.5" viewBox="0 0 7.4 9.4"><rect x="0.45" y="0.45" width="6.5" height="8.5" fill="none" stroke="#8a8a8a" stroke-width="0.9"/><rect x="1.6" y="1.5" width="4.2" height="1.3" fill="none" stroke="#8a8a8a" stroke-width="0.6"/><g fill="#8a8a8a"><rect x="1.45" y="4.0" width="1.15" height="0.95"/><rect x="3.1" y="4.0" width="1.15" height="0.95"/><rect x="4.75" y="4.0" width="1.15" height="0.95"/><rect x="1.45" y="5.45" width="1.15" height="0.95"/><rect x="3.1" y="5.45" width="1.15" height="0.95"/><rect x="4.75" y="5.45" width="1.15" height="0.95"/><rect x="1.45" y="6.9" width="1.15" height="0.95"/><rect x="3.1" y="6.9" width="1.15" height="0.95"/><rect x="4.75" y="6.9" width="1.15" height="0.95"/></g></svg>
<div class="b" style="left:1009.2px;top:249.2px;width:3.20px;height:9.80px;background:#c6c6c6;"></div>
<div class="b" style="left:1005.3px;top:252.5px;width:11.00px;height:3.20px;background:#c6c6c6;"></div>
<div class="b" style="left:858.6px;top:349.2px;width:8.4px;height:8.4px;border:1px solid #b2b2b2;border-radius:2px;background:linear-gradient(#f6f6f6,#dcdcdc)"></div>
<div class="b" style="left:860px;top:362px;width:61.4px;height:21.7px;border-radius:2px;background:#7ab648"></div>
<svg style="left:867.3px;top:366.4px" width="11" height="10.5" viewBox="0 0 16 15"><path fill="#fff" d="M14.6 1v5.2h-5.2l1.9-1.9A4.6 4.6 0 0 0 3.6 6.4H0.9A7.2 7.2 0 0 1 13 2.6z M1.4 14v-5.2h5.2l-1.9 1.9A4.6 4.6 0 0 0 12.4 8.6h2.7A7.2 7.2 0 0 1 3 12.4z"/></svg>
<div class="b" style="left:799.6px;top:393px;width:224.40px;height:0.90px;background:#e1e1e1;"></div>
<div class="b" style="left:799.6px;top:415.8px;width:224.40px;height:0.90px;background:#e1e1e1;"></div>
<div class="b" style="left:987px;top:416.7px;width:0.90px;height:45.30px;background:#e1e1e1;"></div>
<div class="b" style="left:799.6px;top:462.0px;width:224.40px;height:0.90px;background:#e1e1e1;"></div>
<div class="b" style="left:844px;top:515px;width:175.00px;height:0.80px;background:#e1e1e1;"></div>
<svg style="left:1000.7px;top:401.8px" width="11" height="11" viewBox="0 0 11 11"><path fill="#2b7cc8" fill-rule="evenodd" d="M9.45 4.39 L10.91 4.51 L10.91 6.49 L9.45 6.61 L9.08 7.50 L10.02 8.63 L8.63 10.02 L7.50 9.08 L6.61 9.45 L6.49 10.91 L4.51 10.91 L4.39 9.45 L3.50 9.08 L2.37 10.02 L0.98 8.63 L1.92 7.50 L1.55 6.61 L0.09 6.49 L0.09 4.51 L1.55 4.39 L1.92 3.50 L0.98 2.37 L2.37 0.98 L3.50 1.92 L4.39 1.55 L4.51 0.09 L6.49 0.09 L6.61 1.55 L7.50 1.92 L8.63 0.98 L10.02 2.37 L9.08 3.50Z M7.40 5.50 A1.9 1.9 0 1 0 3.60 5.50 A1.9 1.9 0 1 0 7.40 5.50Z"/></svg>
<svg style="left:980.8px;top:469.6px" width="11.2" height="10.4" viewBox="0 0 11.2 10.4"><path d="M8 5.6V8.6c0 0.6-0.4 1-1 1H1.6c-0.6 0-1-0.4-1-1V3.2c0-0.6 0.4-1 1-1H6" fill="none" stroke="#2a7ab8" stroke-width="1"/><path d="M4 7.4L4.5 5.3L9 0.8L10.6 2.4L6.1 6.9Z" fill="#2a7ab8"/></svg>
<div class="b" style="left:821.5px;top:536.6px;width:2.00px;height:1.40px;background:#f2a477;"></div>
<span class="t" style="top:-0.70px;font-size:20px;line-height:26px;color:#fff;left:20.00px;font-weight:bold;font-style:italic;transform:scaleX(.9);transform-origin:0 50%;">ShipStati</span>
<span class="t" style="top:-0.70px;font-size:20px;line-height:26px;color:#fff;left:111.70px;font-weight:bold;font-style:italic;transform:scaleX(.88);transform-origin:0 50%;">n</span>
<span class="t" style="top:7.70px;font-size:10.5px;line-height:15px;color:#fff;left:158.75px;letter-spacing:0.008px;text-shadow:0 0 0.5px #fff;">Insights</span>
<span class="t" style="top:7.70px;font-size:10.5px;line-height:15px;color:#fff;left:213.00px;letter-spacing:0.034px;text-shadow:0 0 0.5px #fff;">Orders</span>
<span class="t" style="top:7.70px;font-size:10.5px;line-height:15px;color:#fff;left:263.40px;letter-spacing:-0.023px;text-shadow:0 0 0.5px #fff;">Shipments</span>
<span class="t" style="top:7.70px;font-size:10.5px;line-height:15px;color:#fff;left:331.00px;letter-spacing:-0.055px;text-shadow:0 0 0.5px #fff;">Products</span>
<span class="t" style="top:7.70px;font-size:10.5px;line-height:15px;color:#fff;left:390.60px;letter-spacing:-0.041px;text-shadow:0 0 0.5px #fff;">Customers</span>
<span class="t" style="top:6.90px;font-size:11.5px;line-height:16px;color:#20679b;left:826.40px;width:300px;text-align:center;font-weight:bold;">?</span>
<span class="t" style="top:39.80px;font-size:8.5px;line-height:12px;color:#a6a6a6;left:13.60px;letter-spacing:-0.068px;">Search Orders</span>
<span class="t" style="top:58.30px;font-size:8.5px;line-height:12px;color:#fff;left:69.50px;letter-spacing:-0.094px;text-shadow:0 0 0.4px #fff;">Advanced Search...</span>
<span class="t" style="top:79.30px;font-size:9.5px;line-height:13px;color:#fff;left:20.30px;letter-spacing:-0.073px;text-shadow:0 0 0.5px #fff;">Awaiting Payment</span>
<span class="t" style="top:106.30px;font-size:9.5px;line-height:13px;color:#fff;left:20.30px;letter-spacing:-0.023px;text-shadow:0 0 0.5px #fff;">On Hold</span>
<span class="t" style="top:132.90px;font-size:9.5px;line-height:13px;color:#fff;left:20.30px;letter-spacing:-0.048px;text-shadow:0 0 0.5px #fff;">Awaiting Shipment</span>
<span class="t" style="top:135.40px;font-size:8.5px;line-height:12px;color:#fff;left:-16.60px;width:300px;text-align:center;font-weight:bold;">14</span>
<span class="t" style="top:158.80px;font-size:9.5px;line-height:13px;color:#4a4a4a;left:20.30px;letter-spacing:0.172px;text-shadow:0 0 0.5px #4a4a4a;">Stores</span>
<span class="t" style="top:183.20px;font-size:9.5px;line-height:13px;color:#4a4a4a;left:20.30px;letter-spacing:0.106px;text-shadow:0 0 0.5px #4a4a4a;">Views</span>
<span class="t" style="top:208.30px;font-size:9.5px;line-height:13px;color:#fff;left:20.40px;letter-spacing:0.032px;text-shadow:0 0 0.5px #fff;">Shipped</span>
<span class="t" style="top:235.10px;font-size:9.5px;line-height:13px;color:#fff;left:20.40px;letter-spacing:-0.072px;text-shadow:0 0 0.5px #fff;">Cancelled</span>
<span class="t" style="top:38.20px;font-size:12.5px;line-height:17px;color:#6a6a6a;left:160.00px;letter-spacing:-0.196px;">Awaiting Shipment :: All Orders</span>
<span class="t" style="top:41.30px;font-size:8.5px;line-height:12px;color:#2f7cc4;left:330.00px;letter-spacing:0.213px;">(reload)</span>
<span class="t" style="top:62.40px;font-size:8.5px;line-height:12px;color:#4a4a4a;left:37.40px;width:300px;text-align:center;">Create Label</span>
<span class="t" style="top:62.40px;font-size:8.5px;line-height:12px;color:#4a4a4a;left:86.80px;width:300px;text-align:center;">Print</span>
<span class="t" style="top:62.40px;font-size:8.5px;line-height:12px;color:#4a4a4a;left:142.75px;width:300px;text-align:center;">New Order</span>
<span class="t" style="top:62.40px;font-size:8.5px;line-height:12px;color:#4a4a4a;left:188.20px;width:300px;text-align:center;">Tag</span>
<span class="t" style="top:62.40px;font-size:8.5px;line-height:12px;color:#4a4a4a;left:228.20px;width:300px;text-align:center;">Assign</span>
<span class="t" style="top:62.40px;font-size:8.5px;line-height:12px;color:#4a4a4a;left:293.80px;width:300px;text-align:center;">Update Rates</span>
<span class="t" style="top:62.40px;font-size:8.5px;line-height:12px;color:#4a4a4a;left:347.10px;width:300px;text-align:center;">Hold</span>
<span class="t" style="top:62.40px;font-size:8.5px;line-height:12px;color:#4a4a4a;left:405.85px;width:300px;text-align:center;">Other Actions</span>
<span class="t" style="top:43.20px;font-size:8.5px;line-height:12px;color:#4a4a4a;left:738.95px;width:300px;text-align:center;">Layout</span>
<span class="t" style="top:43.20px;font-size:8.5px;line-height:12px;color:#4a4a4a;left:788.45px;width:300px;text-align:center;">Columns</span>
<span class="t" style="top:43.20px;font-size:8.5px;line-height:12px;color:#4a4a4a;left:842.30px;width:300px;text-align:center;">Group by</span>
<span class="t" style="top:87.50px;font-size:8.3px;line-height:12px;color:#666;left:163.70px;letter-spacing:-0.109px;">Store</span>
<span class="t" style="top:87.50px;font-size:8.3px;line-height:12px;color:#666;left:204.20px;letter-spacing:-0.011px;">Destination</span>
<span class="t" style="top:87.50px;font-size:8.3px;line-height:12px;color:#666;left:266.20px;letter-spacing:-0.080px;">Assignee</span>
<span class="t" style="top:87.50px;font-size:8.3px;line-height:12px;color:#666;left:321.30px;letter-spacing:0.036px;">Tag</span>
<span class="t" style="top:87.50px;font-size:8.3px;line-height:12px;color:#666;left:355.60px;letter-spacing:0.005px;">Order Date</span>
<span class="t" style="top:87.50px;font-size:8.3px;line-height:12px;color:#666;left:417.30px;letter-spacing:-0.013px;">Other</span>
<span class="t" style="top:87.50px;font-size:8.3px;line-height:12px;color:#666;left:458.90px;letter-spacing:0.006px;">Saved Filters</span>
<span class="t" style="top:90.60px;font-size:8.5px;line-height:12px;color:#444;left:968.00px;letter-spacing:-0.110px;">Show Sidebar</span>
<span class="t" style="top:113.40px;font-size:8.3px;line-height:12px;color:#555;left:188.80px;letter-spacing:-0.109px;">Store</span>
<span class="t" style="top:113.40px;font-size:8.3px;line-height:12px;color:#555;left:283.80px;letter-spacing:0.008px;">Order #</span>
<span class="t" style="top:113.40px;font-size:8.3px;line-height:12px;color:#555;left:365.70px;letter-spacing:-0.053px;">Item Name</span>
<span class="t" style="top:113.40px;font-size:8.3px;line-height:12px;color:#555;left:533.00px;letter-spacing:-0.064px;">Item SKU</span>
<span class="t" style="top:113.40px;font-size:8.3px;line-height:12px;color:#222;left:603.30px;letter-spacing:-0.098px;">Notes</span>
<span class="t" style="top:113.40px;font-size:8.3px;line-height:12px;color:#555;left:674.00px;letter-spacing:-0.004px;">Open Batch #</span>
<span class="t" style="top:113.40px;font-size:8.3px;line-height:12px;color:#555;left:747.50px;letter-spacing:-0.083px;">Rate</span>
<span class="t" style="top:136.00px;font-size:10px;line-height:14px;color:#2b55a8;left:188.70px;font-weight:bold;font-style:italic;transform:scaleX(.8) skewX(-7deg);transform-origin:0 50%;">S</span>
<span class="t" style="top:136.00px;font-size:10px;line-height:14px;color:#444;left:194.20px;font-weight:bold;font-style:italic;transform:scaleX(.8) skewX(-7deg);transform-origin:0 50%;">S</span>
<span class="t" style="top:136.60px;font-size:8.3px;line-height:12px;color:#2a2a2a;left:203.40px;letter-spacing:-0.038px;">Manual Store</span>
<span class="t" style="top:137.00px;font-size:8.3px;line-height:12px;color:#3a80c1;left:283.80px;letter-spacing:0.037px;">PARTS100015</span>
<span class="t" style="top:137.00px;font-size:8.3px;line-height:12px;color:#222;left:365.60px;letter-spacing:0.048px;">Standard Propane Tank Regulator</span>
<span class="t" style="top:137.00px;font-size:8.3px;line-height:12px;color:#222;left:532.80px;letter-spacing:0.009px;">D4506</span>
<span class="t" style="top:137.00px;font-size:8.3px;line-height:12px;color:#2f7cc4;left:674.50px;letter-spacing:-0.031px;text-shadow:0 0 0.3px #2f7cc4;">100029</span>
<span class="t" style="top:156.30px;font-size:10px;line-height:14px;color:#2b55a8;left:188.70px;font-weight:bold;font-style:italic;transform:scaleX(.8) skewX(-7deg);transform-origin:0 50%;">S</span>
<span class="t" style="top:156.30px;font-size:10px;line-height:14px;color:#444;left:194.20px;font-weight:bold;font-style:italic;transform:scaleX(.8) skewX(-7deg);transform-origin:0 50%;">S</span>
<span class="t" style="top:156.90px;font-size:8.3px;line-height:12px;color:#2a2a2a;left:203.40px;letter-spacing:-0.038px;">Manual Store</span>
<span class="t" style="top:157.30px;font-size:8.3px;line-height:12px;color:#3a80c1;left:283.80px;letter-spacing:0.037px;">PARTS100016</span>
<span class="t" style="top:157.30px;font-size:8.3px;line-height:12px;color:#222;left:365.60px;letter-spacing:0.018px;">Natural Gas Conversion Kit</span>
<span class="t" style="top:157.30px;font-size:8.3px;line-height:12px;color:#222;left:532.80px;letter-spacing:0.009px;">D4504</span>
<span class="t" style="top:157.30px;font-size:8.3px;line-height:12px;color:#2f7cc4;left:674.50px;letter-spacing:-0.031px;text-shadow:0 0 0.3px #2f7cc4;">100029</span>
<span class="t" style="top:176.60px;font-size:10px;line-height:14px;color:#2b55a8;left:188.70px;font-weight:bold;font-style:italic;transform:scaleX(.8) skewX(-7deg);transform-origin:0 50%;">S</span>
<span class="t" style="top:176.60px;font-size:10px;line-height:14px;color:#444;left:194.20px;font-weight:bold;font-style:italic;transform:scaleX(.8) skewX(-7deg);transform-origin:0 50%;">S</span>
<span class="t" style="top:177.20px;font-size:8.3px;line-height:12px;color:#2a2a2a;left:203.40px;letter-spacing:-0.038px;">Manual Store</span>
<span class="t" style="top:177.60px;font-size:8.3px;line-height:12px;color:#3a80c1;left:283.80px;letter-spacing:0.037px;">PARTS100017</span>
<span class="t" style="top:177.60px;font-size:8.3px;line-height:12px;color:#222;left:365.60px;letter-spacing:0.008px;">3/8 Brass Coupling Nut</span>
<span class="t" style="top:177.60px;font-size:8.3px;line-height:12px;color:#222;left:532.80px;letter-spacing:0.009px;">D4503</span>
<span class="t" style="top:177.60px;font-size:8.3px;line-height:12px;color:#2f7cc4;left:674.50px;letter-spacing:-0.031px;text-shadow:0 0 0.3px #2f7cc4;">100029</span>
<span class="t" style="top:196.90px;font-size:10px;line-height:14px;color:#2b55a8;left:188.70px;font-weight:bold;font-style:italic;transform:scaleX(.8) skewX(-7deg);transform-origin:0 50%;">S</span>
<span class="t" style="top:196.90px;font-size:10px;line-height:14px;color:#444;left:194.20px;font-weight:bold;font-style:italic;transform:scaleX(.8) skewX(-7deg);transform-origin:0 50%;">S</span>
<span class="t" style="top:197.50px;font-size:8.3px;line-height:12px;color:#2a2a2a;left:203.40px;letter-spacing:-0.038px;">Manual Store</span>
<span class="t" style="top:197.90px;font-size:8.3px;line-height:12px;color:#3a80c1;left:283.80px;letter-spacing:0.037px;">PARTS100018</span>
<span class="t" style="top:197.90px;font-size:8.3px;line-height:12px;color:#222;left:365.60px;letter-spacing:0.008px;">3/8 Brass Coupling Nut</span>
<span class="t" style="top:197.90px;font-size:8.3px;line-height:12px;color:#222;left:532.80px;letter-spacing:0.009px;">D4503</span>
<span class="t" style="top:197.90px;font-size:8.3px;line-height:12px;color:#2f7cc4;left:674.50px;letter-spacing:-0.031px;text-shadow:0 0 0.3px #2f7cc4;">100029</span>
<span class="t" style="top:217.20px;font-size:10px;line-height:14px;color:#2b55a8;left:188.70px;font-weight:bold;font-style:italic;transform:scaleX(.8) skewX(-7deg);transform-origin:0 50%;">S</span>
<span class="t" style="top:217.20px;font-size:10px;line-height:14px;color:#444;left:194.20px;font-weight:bold;font-style:italic;transform:scaleX(.8) skewX(-7deg);transform-origin:0 50%;">S</span>
<span class="t" style="top:217.80px;font-size:8.3px;line-height:12px;color:#2a2a2a;left:203.40px;letter-spacing:-0.038px;">Manual Store</span>
<span class="t" style="top:218.20px;font-size:8.3px;line-height:12px;color:#3a80c1;left:283.80px;letter-spacing:0.037px;">PARTS100013</span>
<span class="t" style="top:218.20px;font-size:8.3px;line-height:12px;color:#222;left:365.60px;letter-spacing:-0.003px;">3/8-in Quick Connector</span>
<span class="t" style="top:218.20px;font-size:8.3px;line-height:12px;color:#222;left:532.80px;letter-spacing:0.100px;">E5892</span>
<span class="t" style="top:237.50px;font-size:10px;line-height:14px;color:#2b55a8;left:188.70px;font-weight:bold;font-style:italic;transform:scaleX(.8) skewX(-7deg);transform-origin:0 50%;">S</span>
<span class="t" style="top:237.50px;font-size:10px;line-height:14px;color:#444;left:194.20px;font-weight:bold;font-style:italic;transform:scaleX(.8) skewX(-7deg);transform-origin:0 50%;">S</span>
<span class="t" style="top:238.10px;font-size:8.3px;line-height:12px;color:#2a2a2a;left:203.40px;letter-spacing:-0.038px;">Manual Store</span>
<span class="t" style="top:238.50px;font-size:8.3px;line-height:12px;color:#3a80c1;left:283.80px;letter-spacing:0.037px;">PARTS100014</span>
<span class="t" style="top:238.50px;font-size:8.3px;line-height:12px;color:#222;left:365.60px;letter-spacing:0.020px;">Extension Hose</span>
<span class="t" style="top:238.50px;font-size:8.3px;line-height:12px;color:#222;left:532.80px;letter-spacing:0.100px;">E5893</span>
<span class="t" style="top:257.80px;font-size:10px;line-height:14px;color:#2b55a8;left:188.70px;font-weight:bold;font-style:italic;transform:scaleX(.8) skewX(-7deg);transform-origin:0 50%;">S</span>
<span class="t" style="top:257.80px;font-size:10px;line-height:14px;color:#444;left:194.20px;font-weight:bold;font-style:italic;transform:scaleX(.8) skewX(-7deg);transform-origin:0 50%;">S</span>
<span class="t" style="top:258.40px;font-size:8.3px;line-height:12px;color:#2a2a2a;left:203.40px;letter-spacing:-0.038px;">Manual Store</span>
<span class="t" style="top:258.80px;font-size:8.3px;line-height:12px;color:#3a80c1;left:283.80px;letter-spacing:0.037px;">PARTS100009</span>
<span class="t" style="top:258.80px;font-size:8.3px;line-height:12px;color:#222;left:365.60px;letter-spacing:0.008px;">3/8 Brass Coupling Nut</span>
<span class="t" style="top:258.80px;font-size:8.3px;line-height:12px;color:#222;left:532.80px;letter-spacing:0.009px;">D4503</span>
<span class="t" style="top:278.10px;font-size:10px;line-height:14px;color:#2b55a8;left:188.70px;font-weight:bold;font-style:italic;transform:scaleX(.8) skewX(-7deg);transform-origin:0 50%;">S</span>
<span class="t" style="top:278.10px;font-size:10px;line-height:14px;color:#444;left:194.20px;font-weight:bold;font-style:italic;transform:scaleX(.8) skewX(-7deg);transform-origin:0 50%;">S</span>
<span class="t" style="top:278.70px;font-size:8.3px;line-height:12px;color:#2a2a2a;left:203.40px;letter-spacing:-0.038px;">Manual Store</span>
<span class="t" style="top:279.10px;font-size:8.3px;line-height:12px;color:#3a80c1;left:283.80px;letter-spacing:0.037px;">PARTS100010</span>
<span class="t" style="top:279.10px;font-size:8.3px;line-height:12px;color:#222;left:365.60px;letter-spacing:0.018px;">Natural Gas Conversion Kit</span>
<span class="t" style="top:279.10px;font-size:8.3px;line-height:12px;color:#222;left:532.80px;letter-spacing:0.009px;">D4504</span>
<span class="t" style="top:298.40px;font-size:10px;line-height:14px;color:#2b55a8;left:188.70px;font-weight:bold;font-style:italic;transform:scaleX(.8) skewX(-7deg);transform-origin:0 50%;">S</span>
<span class="t" style="top:298.40px;font-size:10px;line-height:14px;color:#444;left:194.20px;font-weight:bold;font-style:italic;transform:scaleX(.8) skewX(-7deg);transform-origin:0 50%;">S</span>
<span class="t" style="top:299.00px;font-size:8.3px;line-height:12px;color:#2a2a2a;left:203.40px;letter-spacing:-0.038px;">Manual Store</span>
<span class="t" style="top:299.40px;font-size:8.3px;line-height:12px;color:#3a80c1;left:283.80px;letter-spacing:0.094px;">PARTS100011</span>
<span class="t" style="top:299.40px;font-size:8.3px;line-height:12px;color:#222;left:365.60px;letter-spacing:0.048px;">Standard Propane Tank Regulator</span>
<span class="t" style="top:299.40px;font-size:8.3px;line-height:12px;color:#222;left:532.80px;letter-spacing:0.009px;">D4506</span>
<span class="t" style="top:318.70px;font-size:10px;line-height:14px;color:#2b55a8;left:188.70px;font-weight:bold;font-style:italic;transform:scaleX(.8) skewX(-7deg);transform-origin:0 50%;">S</span>
<span class="t" style="top:318.70px;font-size:10px;line-height:14px;color:#444;left:194.20px;font-weight:bold;font-style:italic;transform:scaleX(.8) skewX(-7deg);transform-origin:0 50%;">S</span>
<span class="t" style="top:319.30px;font-size:8.3px;line-height:12px;color:#2a2a2a;left:203.40px;letter-spacing:-0.038px;">Manual Store</span>
<span class="t" style="top:319.70px;font-size:8.3px;line-height:12px;color:#3a80c1;left:283.80px;letter-spacing:0.037px;">PARTS100012</span>
<span class="t" style="top:319.70px;font-size:8.3px;line-height:12px;color:#222;left:365.60px;letter-spacing:0.074px;">Tank Refill Adapter</span>
<span class="t" style="top:319.70px;font-size:8.3px;line-height:12px;color:#222;left:532.80px;letter-spacing:0.100px;">E5891</span>
<span class="t" style="top:109.90px;font-size:10px;line-height:14px;color:#2b55a8;left:800.40px;font-weight:bold;font-style:italic;transform:scaleX(.8) skewX(-7deg);transform-origin:0 50%;">S</span>
<span class="t" style="top:109.90px;font-size:10px;line-height:14px;color:#444;left:805.90px;font-weight:bold;font-style:italic;transform:scaleX(.8) skewX(-7deg);transform-origin:0 50%;">S</span>
<span class="t" style="top:109.50px;font-size:9.5px;line-height:13px;color:#5a5a5a;left:814.80px;letter-spacing:-0.145px;">PARTS100013</span>
<span class="t" style="top:110.60px;font-size:8.5px;line-height:12px;color:#2f7cc4;left:933.00px;letter-spacing:-0.098px;">Create Label</span>
<span class="t" style="top:110.60px;font-size:8.5px;line-height:12px;color:#2f7cc4;left:990.00px;letter-spacing:-0.210px;">Batch</span>
<span class="t" style="top:132.20px;font-size:9.5px;line-height:13px;color:#4e4e4e;left:812.00px;font-weight:bold;letter-spacing:-0.051px;">SHIPPING</span>
<span class="t" style="top:131.20px;font-size:9.5px;line-height:13px;color:#2f7cc4;left:946.00px;font-weight:bold;letter-spacing:-0.132px;">Apply Preset</span>
<span class="t" style="top:155.10px;font-size:9px;line-height:13px;color:#555;right:167.30px;letter-spacing:-0.094px;">Requested</span>
<span class="t" style="top:154.50px;font-size:8.3px;line-height:12px;color:#999;left:861.80px;font-style:italic;letter-spacing:-0.036px;">Not specified</span>
<span class="t" style="top:179.00px;font-size:9px;line-height:13px;color:#555;right:168.20px;">Ship from</span>
<span class="t" style="top:177.50px;font-size:9px;line-height:13px;color:#333;left:866.00px;">Warehouse #1</span>
<span class="t" style="top:176.80px;font-size:10.5px;line-height:15px;color:#777;left:981.50px;letter-spacing:-0.004px;text-shadow:0 0 0.4px #777;">Calc</span>
<span class="t" style="top:202.90px;font-size:9px;line-height:13px;color:#555;right:168.20px;">Weight</span>
<span class="t" style="top:202.10px;font-size:9px;line-height:13px;color:#333;right:143.30px;">0</span>
<span class="t" style="top:203.10px;font-size:7.6px;line-height:11px;color:#333;left:900.00px;">lb</span>
<span class="t" style="top:202.10px;font-size:9px;line-height:13px;color:#333;right:92.60px;">8</span>
<span class="t" style="top:203.10px;font-size:7.6px;line-height:11px;color:#333;left:950.40px;">oz</span>
<span class="t" style="top:225.00px;font-size:9px;line-height:13px;color:#555;right:168.20px;">Service</span>
<span class="t" style="top:225.10px;font-size:9px;line-height:13px;color:#333;left:865.40px;letter-spacing:0.032px;">FedEx Standard Overnight®</span>
<span class="t" style="top:247.70px;font-size:9px;line-height:13px;color:#555;right:168.20px;">Package</span>
<span class="t" style="top:247.50px;font-size:9px;line-height:13px;color:#333;left:865.40px;">FedEx® Envelope</span>
<span class="t" style="top:272.20px;font-size:9px;line-height:13px;color:#555;right:168.20px;">Size</span>
<span class="t" style="top:272.20px;font-size:9px;line-height:13px;color:#333;right:142.70px;">0</span>
<span class="t" style="top:273.60px;font-size:7px;line-height:10px;color:#666;left:899.60px;">×</span>
<span class="t" style="top:272.20px;font-size:9px;line-height:13px;color:#333;right:97.30px;">0</span>
<span class="t" style="top:273.60px;font-size:7px;line-height:10px;color:#666;left:945.00px;">×</span>
<span class="t" style="top:272.20px;font-size:9px;line-height:13px;color:#333;right:51.70px;">0</span>
<span class="t" style="top:272.90px;font-size:7.4px;line-height:11px;color:#444;left:990.40px;">(in)</span>
<span class="t" style="top:295.20px;font-size:9px;line-height:13px;color:#555;right:168.20px;">Confirm</span>
<span class="t" style="top:295.10px;font-size:9px;line-height:13px;color:#333;left:866.00px;">No Signature</span>
<span class="t" style="top:318.80px;font-size:9px;line-height:13px;color:#555;right:168.20px;">Insurance</span>
<span class="t" style="top:318.30px;font-size:9px;line-height:13px;color:#333;left:866.00px;">None</span>
<span class="t" style="top:345.70px;font-size:8.3px;line-height:12px;color:#333;left:871.00px;letter-spacing:0.022px;">Save as defaults for ordered product</span>
<span class="t" style="top:367.70px;font-size:8.3px;line-height:12px;color:#fff;left:880.30px;font-weight:bold;letter-spacing:-0.178px;">Get Rate</span>
<span class="t" style="top:400.00px;font-size:9.5px;line-height:13px;color:#4e4e4e;left:812.00px;font-weight:bold;letter-spacing:-0.113px;">ITEM(S) ORDERED</span>
<span class="t" style="top:419.90px;font-size:9px;line-height:13px;color:#2f7cc4;left:804.20px;letter-spacing:0.052px;">3/8-in Quick Connector</span>
<span class="t" style="top:432.50px;font-size:9px;line-height:13px;color:#999;left:804.20px;letter-spacing:0.027px;">SKU: E5892</span>
<span class="t" style="top:444.50px;font-size:9px;line-height:13px;color:#222;left:804.20px;letter-spacing:0.143px;">Total: <span style="color:#5d9138">$28.50</span></span>
<span class="t" style="top:424.30px;font-size:12.5px;line-height:17px;color:#222;left:854.60px;width:300px;text-align:center;text-shadow:0 0 0.6px #222;">1</span>
<span class="t" style="top:468.90px;font-size:9.5px;line-height:13px;color:#4e4e4e;left:812.00px;font-weight:bold;letter-spacing:-0.025px;">CUSTOMER</span>
<span class="t" style="top:468.90px;font-size:9.5px;line-height:13px;color:#2f7cc4;left:994.50px;font-weight:bold;letter-spacing:-0.263px;">Edit</span>
<span class="t" style="top:491.80px;font-size:9px;line-height:13px;color:#555;left:807.00px;letter-spacing:0.055px;">Sold To:</span>
<span class="t" style="top:491.80px;font-size:8.3px;line-height:12px;color:#222;left:846.00px;letter-spacing:-0.042px;">Hayley Savige</span>
<span class="t" style="top:501.00px;font-size:8.3px;line-height:12px;color:#2f7cc4;left:846.00px;letter-spacing:0.007px;">Leslie.Knope@PawneeIndiana.com</span>
<span class="t" style="top:517.50px;font-size:9px;line-height:13px;color:#555;left:807.80px;letter-spacing:-0.045px;">Ship To:</span>
<span class="t" style="top:518.50px;font-size:8.3px;line-height:12px;color:#222;left:846.00px;letter-spacing:-0.042px;">Hayley Savige</span>
<span class="t" style="top:518.20px;font-size:8.3px;line-height:12px;color:#2f7cc4;left:961.80px;letter-spacing:0.097px;">Verify Address</span>
<span class="t" style="top:527.40px;font-size:8.3px;line-height:12px;color:#222;left:846.00px;letter-spacing:-0.017px;">Record Bar</span>
</body></html>
